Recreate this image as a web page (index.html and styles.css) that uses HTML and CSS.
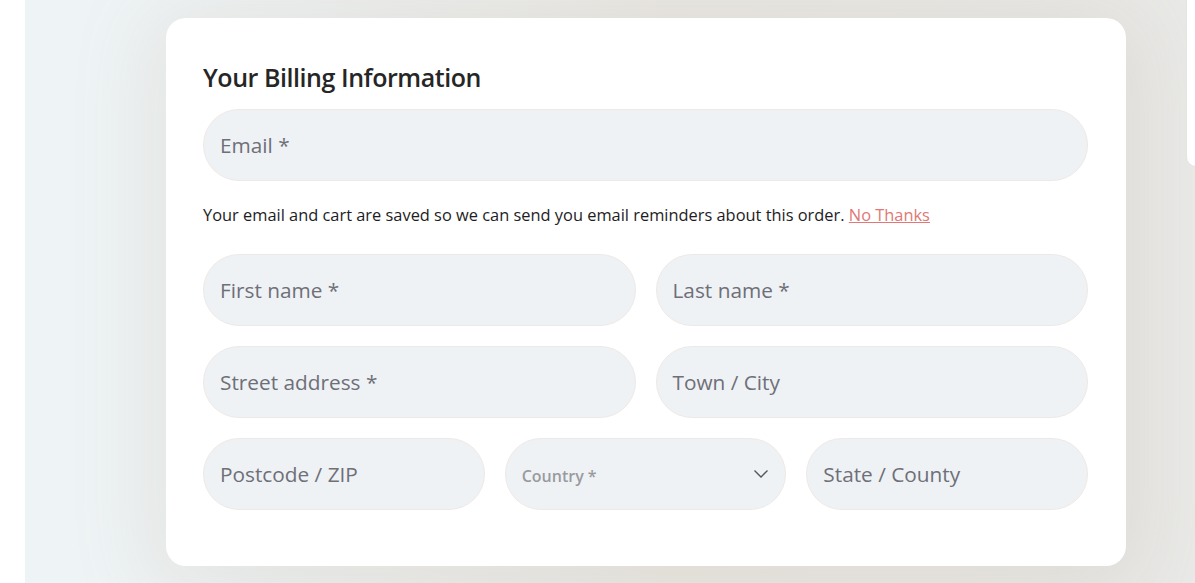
FILE: index.html
```html
<!DOCTYPE html>
<html lang="en">
<head>
<meta charset="utf-8">
<title>Billing</title>
<link rel="stylesheet" href="styles.css">
</head>
<body>
<div class="page">
  <div class="gutter"></div>
  <div class="panel">
    <form class="card">
      <h2 class="title">Your Billing Information</h2>
      <div class="field full"><span class="ph">Email *</span></div>
      <p class="note">Your email and cart are saved so we can send you email reminders about this order. <a href="#" class="link">No Thanks</a></p>
      <div class="row two">
        <div class="field"><span class="ph">First name *</span></div>
        <div class="field"><span class="ph">Last name *</span></div>
      </div>
      <div class="row two">
        <div class="field"><span class="ph">Street address *</span></div>
        <div class="field"><span class="ph">Town / City</span></div>
      </div>
      <div class="row three">
        <div class="field"><span class="ph">Postcode / ZIP</span></div>
        <div class="field select"><span class="ph small">Country *</span>
          <svg class="chev" width="16" height="10" viewBox="0 0 16 10"><path d="M1.5 1.5 L8 8 L14.5 1.5" fill="none" stroke="#555" stroke-width="1.4"/></svg>
        </div>
        <div class="field"><span class="ph">State / County</span></div>
      </div>
    </form>
    <div class="side"></div>
  </div>
</div>
</body>
</html>
```
FILE: styles.css
```css
html, body {
  margin: 0;
  padding: 0;
  height: 100%;
  overflow: hidden;
  background: #ffffff;
}
.page {
  display: flex;
  height: 583px;
  font-family: "Open Sans", "Noto Sans", sans-serif;
}
.gutter {
  width: 25px;
  flex-shrink: 0;
  background: #ffffff;
}
.panel {
  flex: 1;
  display: flex;
  align-items: flex-start;
  padding: 18px 0 0 141px;
  background: linear-gradient(90deg, #eef3f5 0%, #eef3f4 15%, #e9e8e4 55%, #e9e9e7 100%);
  overflow: hidden;
}
.card {
  width: 960px;
  flex-shrink: 0;
  box-sizing: border-box;
  background: #ffffff;
  border-radius: 20px;
  padding: 44px 38px 56px 37px;
  box-shadow: 0 10px 80px 16px rgba(170, 150, 125, 0.15);
  display: flex;
  flex-direction: column;
}
.title {
  margin: 0 0 16px;
  font-size: 25px;
  line-height: 31px;
  font-weight: 600;
  color: #262626;
  letter-spacing: -0.45px;
}
.field {
  height: 72px;
  box-sizing: border-box;
  border: 1px solid #efe9e5;
  background: #eef2f5;
  border-radius: 36px;
  display: flex;
  align-items: center;
  padding: 0 16px;
}
.ph {
  font-size: 20.8px;
  color: #6f6f78;
}
.ph.small {
  font-size: 16px;
  font-weight: 600;
  color: #9a9a9e;
  margin-top: 4px;
}
.select {
  justify-content: space-between;
  padding-right: 16px;
}
.note {
  margin: 22px 0 27px;
  font-size: 16.4px;
  line-height: 24px;
  color: #1d1d24;
}
.link {
  color: #e07876;
  text-decoration: underline;
}
.row {
  display: grid;
  gap: 20px;
  margin-bottom: 20px;
}
.row:last-child {
  margin-bottom: 0;
}
.two {
  grid-template-columns: 1fr 1fr;
}
.three {
  grid-template-columns: 1fr 1fr 1fr;
}
.side {
  flex-shrink: 0;
  width: 300px;
  height: 185px;
  margin: -38px 0 0 60px;
  background: #ffffff;
  border: 1px solid #e4e4e4;
  border-radius: 10px;
}
```
